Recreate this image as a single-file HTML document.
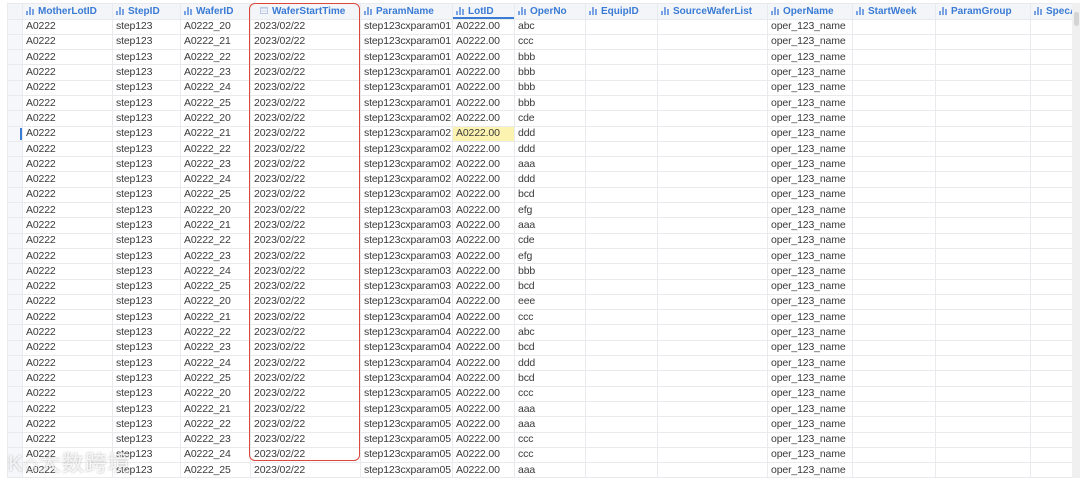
<!DOCTYPE html>
<html><head><meta charset="utf-8"><style>
*{margin:0;padding:0;box-sizing:border-box}
body{width:1080px;height:478px;overflow:hidden;background:#fff;font-family:"Liberation Sans","Noto Sans CJK SC",sans-serif;font-size:10.5px;color:#3a3a3a;position:relative}
table{position:absolute;left:7px;top:3px;border-collapse:collapse;table-layout:fixed;width:1065px}
td{height:15.3px;border:1px solid #e8eaed;padding:0 0 0 3px;line-height:13px;white-space:nowrap;overflow:hidden;border-top:none;letter-spacing:-0.15px}
td:first-child{background:#f5f7fa;padding:0;position:relative}
tr.h td{background:#f3f5f8;color:#3a7bd5;font-weight:bold;font-size:10px;height:15.5px;border-top:1px solid #e8eaed;letter-spacing:0}
.ic{display:inline-block;width:8px;height:8px;margin-right:4px;vertical-align:-1px;position:relative}
.ic i{position:absolute;bottom:0;width:1.5px;background:#7aa3e4}
.hi{background:#fdf3b0}
.mk{position:absolute;left:12px;top:1px;width:2px;height:12px;background:#3a7bd5}
</style></head><body>
<table>
<colgroup><col style="width:15px"><col style="width:90px"><col style="width:68px"><col style="width:70px"><col style="width:110px"><col style="width:92px"><col style="width:62px"><col style="width:71px"><col style="width:72px"><col style="width:110px"><col style="width:85px"><col style="width:83px"><col style="width:95px"><col style="width:42px"></colgroup>
<tr class="h"><td></td>
<td><span class="ic"><i style="left:0;height:4px"></i><i style="left:3px;height:8px"></i><i style="left:6px;height:6px"></i></span>MotherLotID</td>
<td><span class="ic"><i style="left:0;height:4px"></i><i style="left:3px;height:8px"></i><i style="left:6px;height:6px"></i></span>StepID</td>
<td><span class="ic"><i style="left:0;height:4px"></i><i style="left:3px;height:8px"></i><i style="left:6px;height:6px"></i></span>WaferID</td>
<td style="padding-left:9px"><span style="display:inline-block;width:8px;height:7px;margin-right:4px;border:1px solid #b8cbe8;background:repeating-linear-gradient(#cfdcf0 0 1px,transparent 1px 2.5px)"></span>WaferStartTime</td>
<td><span class="ic"><i style="left:0;height:4px"></i><i style="left:3px;height:8px"></i><i style="left:6px;height:6px"></i></span>ParamName</td>
<td style="box-shadow:inset 0 -2px 0 #3a7bd5"><span class="ic"><i style="left:0;height:4px"></i><i style="left:3px;height:8px"></i><i style="left:6px;height:6px"></i></span>LotID</td>
<td><span class="ic"><i style="left:0;height:4px"></i><i style="left:3px;height:8px"></i><i style="left:6px;height:6px"></i></span>OperNo</td>
<td><span class="ic"><i style="left:0;height:4px"></i><i style="left:3px;height:8px"></i><i style="left:6px;height:6px"></i></span>EquipID</td>
<td><span class="ic"><i style="left:0;height:4px"></i><i style="left:3px;height:8px"></i><i style="left:6px;height:6px"></i></span>SourceWaferList</td>
<td><span class="ic"><i style="left:0;height:4px"></i><i style="left:3px;height:8px"></i><i style="left:6px;height:6px"></i></span>OperName</td>
<td><span class="ic"><i style="left:0;height:4px"></i><i style="left:3px;height:8px"></i><i style="left:6px;height:6px"></i></span>StartWeek</td>
<td><span class="ic"><i style="left:0;height:4px"></i><i style="left:3px;height:8px"></i><i style="left:6px;height:6px"></i></span>ParamGroup</td>
<td><span class="ic"><i style="left:0;height:4px"></i><i style="left:3px;height:8px"></i><i style="left:6px;height:6px"></i></span>SpecA</td></tr>
<tr><td></td><td>A0222</td><td>step123</td><td>A0222_20</td><td>2023/02/22</td><td>step123cxparam01</td><td>A0222.00</td><td>abc</td><td></td><td></td><td>oper_123_name</td><td></td><td></td><td></td></tr>
<tr><td></td><td>A0222</td><td>step123</td><td>A0222_21</td><td>2023/02/22</td><td>step123cxparam01</td><td>A0222.00</td><td>ccc</td><td></td><td></td><td>oper_123_name</td><td></td><td></td><td></td></tr>
<tr><td></td><td>A0222</td><td>step123</td><td>A0222_22</td><td>2023/02/22</td><td>step123cxparam01</td><td>A0222.00</td><td>bbb</td><td></td><td></td><td>oper_123_name</td><td></td><td></td><td></td></tr>
<tr><td></td><td>A0222</td><td>step123</td><td>A0222_23</td><td>2023/02/22</td><td>step123cxparam01</td><td>A0222.00</td><td>bbb</td><td></td><td></td><td>oper_123_name</td><td></td><td></td><td></td></tr>
<tr><td></td><td>A0222</td><td>step123</td><td>A0222_24</td><td>2023/02/22</td><td>step123cxparam01</td><td>A0222.00</td><td>bbb</td><td></td><td></td><td>oper_123_name</td><td></td><td></td><td></td></tr>
<tr><td></td><td>A0222</td><td>step123</td><td>A0222_25</td><td>2023/02/22</td><td>step123cxparam01</td><td>A0222.00</td><td>bbb</td><td></td><td></td><td>oper_123_name</td><td></td><td></td><td></td></tr>
<tr><td></td><td>A0222</td><td>step123</td><td>A0222_20</td><td>2023/02/22</td><td>step123cxparam02</td><td>A0222.00</td><td>cde</td><td></td><td></td><td>oper_123_name</td><td></td><td></td><td></td></tr>
<tr><td><div class="mk"></div></td><td>A0222</td><td>step123</td><td>A0222_21</td><td>2023/02/22</td><td>step123cxparam02</td><td class="hi">A0222.00</td><td>ddd</td><td></td><td></td><td>oper_123_name</td><td></td><td></td><td></td></tr>
<tr><td></td><td>A0222</td><td>step123</td><td>A0222_22</td><td>2023/02/22</td><td>step123cxparam02</td><td>A0222.00</td><td>ddd</td><td></td><td></td><td>oper_123_name</td><td></td><td></td><td></td></tr>
<tr><td></td><td>A0222</td><td>step123</td><td>A0222_23</td><td>2023/02/22</td><td>step123cxparam02</td><td>A0222.00</td><td>aaa</td><td></td><td></td><td>oper_123_name</td><td></td><td></td><td></td></tr>
<tr><td></td><td>A0222</td><td>step123</td><td>A0222_24</td><td>2023/02/22</td><td>step123cxparam02</td><td>A0222.00</td><td>ddd</td><td></td><td></td><td>oper_123_name</td><td></td><td></td><td></td></tr>
<tr><td></td><td>A0222</td><td>step123</td><td>A0222_25</td><td>2023/02/22</td><td>step123cxparam02</td><td>A0222.00</td><td>bcd</td><td></td><td></td><td>oper_123_name</td><td></td><td></td><td></td></tr>
<tr><td></td><td>A0222</td><td>step123</td><td>A0222_20</td><td>2023/02/22</td><td>step123cxparam03</td><td>A0222.00</td><td>efg</td><td></td><td></td><td>oper_123_name</td><td></td><td></td><td></td></tr>
<tr><td></td><td>A0222</td><td>step123</td><td>A0222_21</td><td>2023/02/22</td><td>step123cxparam03</td><td>A0222.00</td><td>aaa</td><td></td><td></td><td>oper_123_name</td><td></td><td></td><td></td></tr>
<tr><td></td><td>A0222</td><td>step123</td><td>A0222_22</td><td>2023/02/22</td><td>step123cxparam03</td><td>A0222.00</td><td>cde</td><td></td><td></td><td>oper_123_name</td><td></td><td></td><td></td></tr>
<tr><td></td><td>A0222</td><td>step123</td><td>A0222_23</td><td>2023/02/22</td><td>step123cxparam03</td><td>A0222.00</td><td>efg</td><td></td><td></td><td>oper_123_name</td><td></td><td></td><td></td></tr>
<tr><td></td><td>A0222</td><td>step123</td><td>A0222_24</td><td>2023/02/22</td><td>step123cxparam03</td><td>A0222.00</td><td>bbb</td><td></td><td></td><td>oper_123_name</td><td></td><td></td><td></td></tr>
<tr><td></td><td>A0222</td><td>step123</td><td>A0222_25</td><td>2023/02/22</td><td>step123cxparam03</td><td>A0222.00</td><td>bcd</td><td></td><td></td><td>oper_123_name</td><td></td><td></td><td></td></tr>
<tr><td></td><td>A0222</td><td>step123</td><td>A0222_20</td><td>2023/02/22</td><td>step123cxparam04</td><td>A0222.00</td><td>eee</td><td></td><td></td><td>oper_123_name</td><td></td><td></td><td></td></tr>
<tr><td></td><td>A0222</td><td>step123</td><td>A0222_21</td><td>2023/02/22</td><td>step123cxparam04</td><td>A0222.00</td><td>ccc</td><td></td><td></td><td>oper_123_name</td><td></td><td></td><td></td></tr>
<tr><td></td><td>A0222</td><td>step123</td><td>A0222_22</td><td>2023/02/22</td><td>step123cxparam04</td><td>A0222.00</td><td>abc</td><td></td><td></td><td>oper_123_name</td><td></td><td></td><td></td></tr>
<tr><td></td><td>A0222</td><td>step123</td><td>A0222_23</td><td>2023/02/22</td><td>step123cxparam04</td><td>A0222.00</td><td>bcd</td><td></td><td></td><td>oper_123_name</td><td></td><td></td><td></td></tr>
<tr><td></td><td>A0222</td><td>step123</td><td>A0222_24</td><td>2023/02/22</td><td>step123cxparam04</td><td>A0222.00</td><td>ddd</td><td></td><td></td><td>oper_123_name</td><td></td><td></td><td></td></tr>
<tr><td></td><td>A0222</td><td>step123</td><td>A0222_25</td><td>2023/02/22</td><td>step123cxparam04</td><td>A0222.00</td><td>bcd</td><td></td><td></td><td>oper_123_name</td><td></td><td></td><td></td></tr>
<tr><td></td><td>A0222</td><td>step123</td><td>A0222_20</td><td>2023/02/22</td><td>step123cxparam05</td><td>A0222.00</td><td>ccc</td><td></td><td></td><td>oper_123_name</td><td></td><td></td><td></td></tr>
<tr><td></td><td>A0222</td><td>step123</td><td>A0222_21</td><td>2023/02/22</td><td>step123cxparam05</td><td>A0222.00</td><td>aaa</td><td></td><td></td><td>oper_123_name</td><td></td><td></td><td></td></tr>
<tr><td></td><td>A0222</td><td>step123</td><td>A0222_22</td><td>2023/02/22</td><td>step123cxparam05</td><td>A0222.00</td><td>aaa</td><td></td><td></td><td>oper_123_name</td><td></td><td></td><td></td></tr>
<tr><td></td><td>A0222</td><td>step123</td><td>A0222_23</td><td>2023/02/22</td><td>step123cxparam05</td><td>A0222.00</td><td>ccc</td><td></td><td></td><td>oper_123_name</td><td></td><td></td><td></td></tr>
<tr><td></td><td>A0222</td><td>step123</td><td>A0222_24</td><td>2023/02/22</td><td>step123cxparam05</td><td>A0222.00</td><td>ccc</td><td></td><td></td><td>oper_123_name</td><td></td><td></td><td></td></tr>
<tr><td></td><td>A0222</td><td>step123</td><td>A0222_25</td><td>2023/02/22</td><td>step123cxparam05</td><td>A0222.00</td><td>aaa</td><td></td><td></td><td>oper_123_name</td><td></td><td></td><td></td></tr>
</table>
<div style="position:absolute;left:1072px;top:3px;width:8px;height:475px;background:#f0f0f0"></div>
<div style="position:absolute;left:1074px;top:12px;width:5px;height:14px;background:#d4d4d4;border-radius:3px"></div>
<div style="position:absolute;left:249px;top:3px;width:111px;height:458px;border:1.5px solid #d9483b;border-radius:6px"></div>
<div style="position:absolute;left:8px;top:446px;font-size:22px;color:rgba(255,255,255,0.8);letter-spacing:1px;text-shadow:0 0 2px rgba(100,100,100,0.5)">K<span style="font-size:14px">◎</span>大数跨境</div>
</body></html>
